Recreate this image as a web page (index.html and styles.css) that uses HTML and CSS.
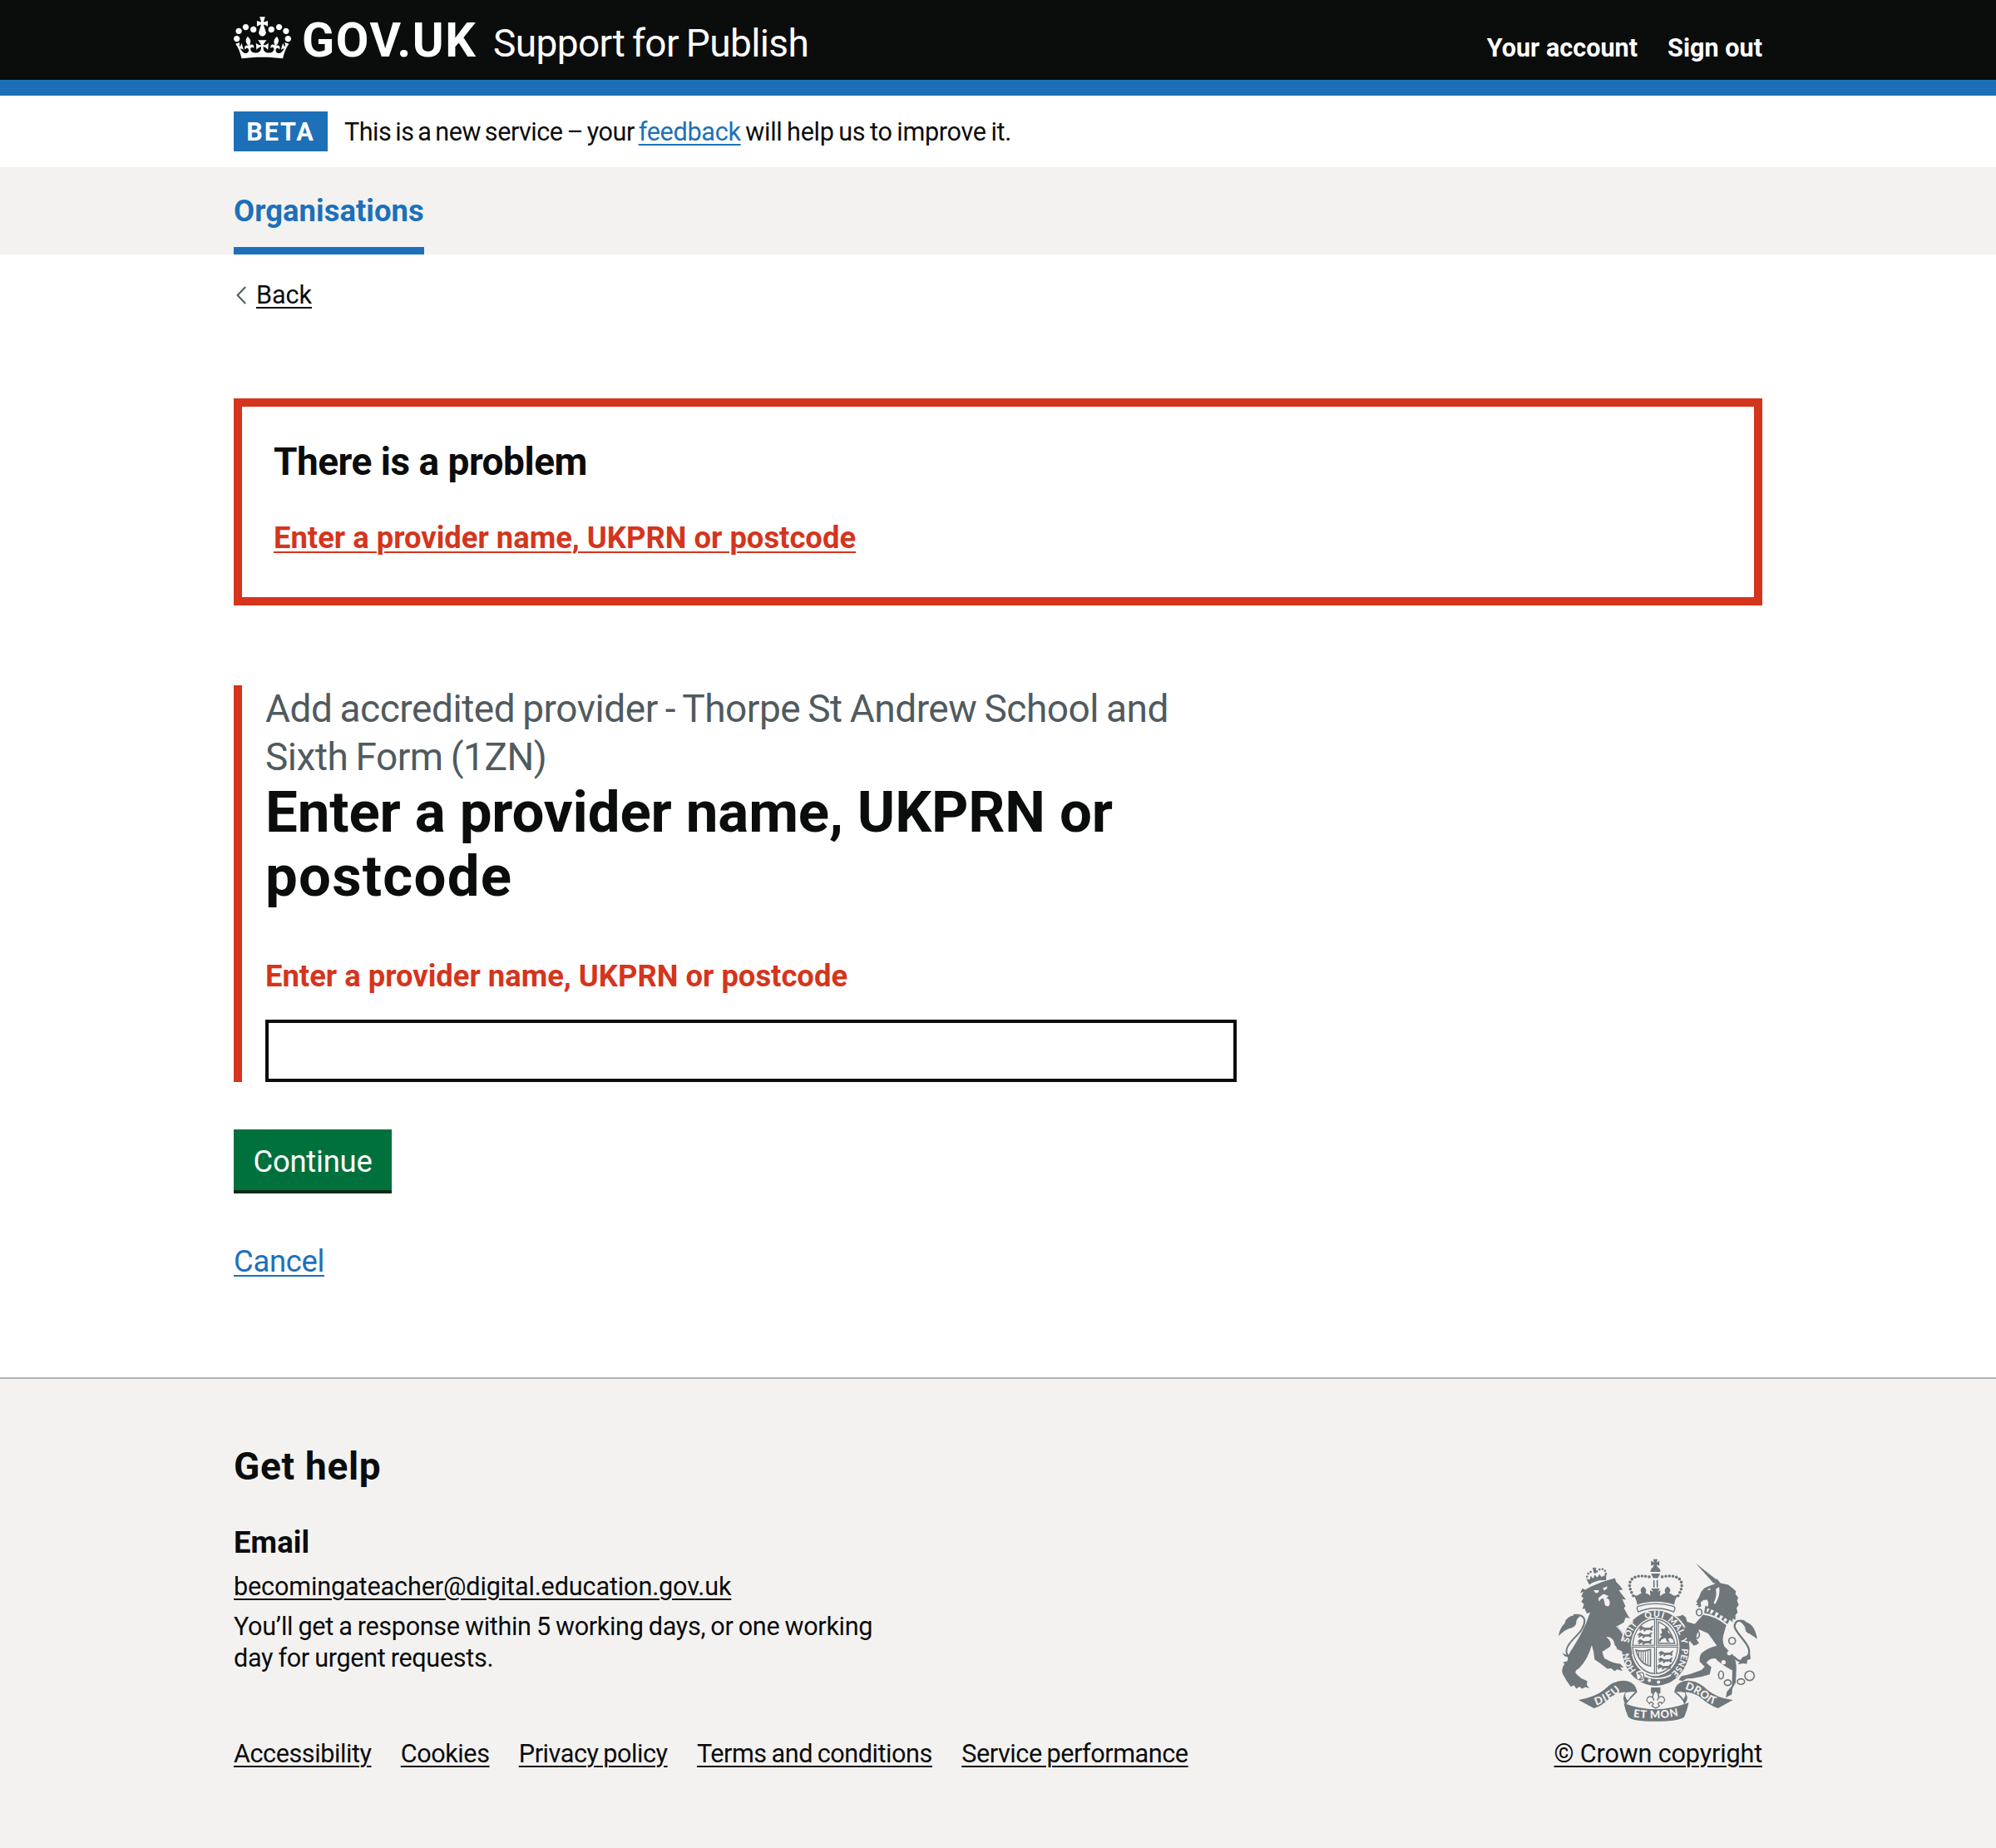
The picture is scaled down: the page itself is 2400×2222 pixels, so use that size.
FILE: index.html
```html
<!DOCTYPE html>
<html lang="en">
<head>
<meta charset="utf-8">
<title>Enter a provider name, UKPRN or postcode - Support for Publish</title>
<link rel="stylesheet" href="styles.css">
</head>
<body>
<header class="header">
  <div class="container header-row">
    <a class="logo" href="#">
      <svg class="logo-crown" viewBox="0 0 132 97" aria-hidden="true"><path fill="currentColor" fill-rule="evenodd" d="M25 30.2c3.5 1.5 7.7-.2 9.1-3.7 1.5-3.6-.2-7.8-3.9-9.2-3.6-1.4-7.6.3-9.1 3.9-1.4 3.5.3 7.5 3.9 9zM9 39.5c3.6 1.5 7.8-.2 9.2-3.7 1.5-3.6-.2-7.8-3.9-9.1-3.6-1.5-7.6.2-9.1 3.8-1.4 3.5.3 7.5 3.8 9zM4.4 57.2c3.5 1.5 7.7-.2 9.1-3.8 1.5-3.6-.2-7.7-3.9-9.1-3.5-1.5-7.6.3-9.1 3.8-1.4 3.5.3 7.6 3.9 9.1zm38.3-21.4c3.5 1.5 7.7-.2 9.1-3.8 1.5-3.6-.2-7.7-3.9-9.1-3.6-1.5-7.6.3-9.1 3.8-1.3 3.6.4 7.7 3.9 9.1zm64.4-5.6c-3.6 1.5-7.8-.2-9.1-3.7-1.5-3.6.2-7.8 3.8-9.2 3.6-1.4 7.7.3 9.2 3.9 1.3 3.5-.4 7.5-3.9 9zm15.9 9.3c-3.6 1.5-7.7-.2-9.1-3.7-1.5-3.6.2-7.8 3.7-9.1 3.6-1.5 7.7.2 9.2 3.8 1.5 3.5-.3 7.5-3.8 9zm4.7 17.7c-3.6 1.5-7.8-.2-9.2-3.8-1.5-3.6.2-7.7 3.9-9.1 3.6-1.5 7.7.3 9.2 3.8 1.3 3.5-.4 7.6-3.9 9.1zM89.3 35.8c-3.6 1.5-7.8-.2-9.2-3.8-1.4-3.6.2-7.7 3.9-9.1 3.6-1.5 7.7.3 9.2 3.8 1.4 3.6-.3 7.7-3.9 9.1zM69.7 17.7l8.9 4.7V9.3l-8.9 2.8c-.2-.3-.5-.6-.9-.9L72.4 0H59.6l3.5 11.2c-.3.3-.6.5-.9.9l-8.8-2.8v13.1l8.8-4.7c.3.3.6.7.9.9l-5 15.4v.1c-.2.8-.4 1.6-.4 2.4 0 4.1 3.1 7.5 7 8.1h.2c.3 0 .7.1 1 .1.4 0 .7 0 1-.1h.2c4-.6 7.1-4.1 7.1-8.1 0-.8-.1-1.7-.4-2.4V34l-5.1-15.4c.4-.2.7-.6 1-.9zM66 92.8c16.9 0 32.8 1.1 47.1 3.2 4-16.9 8.9-26.7 14-33.5l-9.6-3.4c1 4.9 1.1 7.2 0 10.2-1.5-1.4-3-4.3-4.2-8.7L108.6 76c2.8-2 5-3.2 7.5-3.3-4.4 9.4-10 11.9-13.6 11.2-4.3-.8-6.3-4.6-5.6-7.9 1-4.7 5.7-5.9 8-.5 4.3-8.7-3-11.4-7.6-8.8 7.1-7.2 7.9-13.5 2.1-21.1-8 6.1-8.1 12.3-4.5 20.8-4.7-5.4-12.1-2.5-9.5 6.2 3.4-5.2 7.9-2 7.2 3.1-.6 4.3-6.4 7.8-13.5 7.2-10.3-.9-10.9-8-11.2-13.8 2.5-.5 7.1 1.8 11 7.3L80.2 60c-4.1 4.4-8 5.3-12.3 5.4 1.4-4.4 8-11.6 8-11.6H55.5s6.4 7.2 7.9 11.6c-4.2-.1-8-1-12.3-5.4l1.4 16.4c3.9-5.5 8.5-7.7 10.9-7.3-.3 5.8-.9 12.8-11.1 13.8-7.2.6-12.9-2.9-13.5-7.2-.7-5 3.8-8.3 7.1-3.1 2.7-8.7-4.6-11.6-9.4-6.2 3.7-8.5 3.6-14.7-4.6-20.8-5.8 7.6-5 13.9 2.2 21.1-4.7-2.6-11.9.1-7.7 8.8 2.3-5.5 7.1-4.2 8.1.5.7 3.3-1.3 7.1-5.7 7.9-3.5.7-9-1.8-13.5-11.2 2.5.1 4.7 1.3 7.5 3.3l-4.7-15.4c-1.2 4.4-2.7 7.2-4.3 8.7-1.1-3-.9-5.3 0-10.2l-9.5 3.4c5 6.9 9.9 16.7 14 33.5 14.8-2.1 30.8-3.2 47.7-3.2z"/></svg>
      <span class="logo-text">GOV.UK</span>
    </a>
    <a class="service-name" href="#">Support for Publish</a>
    <nav class="account-nav">
      <a href="#">Your account</a>
      <a href="#">Sign out</a>
    </nav>
  </div>
</header>

<div class="container phase-banner">
  <strong class="phase-tag">BETA</strong>
  <span class="phase-text"><span class="phase-lead">This is a new service – your </span><a class="link" href="#">feedback</a> will help us to improve it.</span>
</div>

<nav class="primary-nav">
  <div class="container"><a class="primary-nav-link" href="#">Organisations</a></div>
</nav>

<div class="container">
  <a class="back-link" href="#">
    <svg class="back-chevron" viewBox="0 0 12 22" aria-hidden="true"><path d="M11.2 1 1.6 11l9.6 10" fill="none" stroke="currentColor" stroke-width="2"/></svg>
    <span class="back-text">Back</span>
  </a>

  <main>
    <section class="error-summary">
      <h2 class="error-summary-title">There is a problem</h2>
      <a class="error-summary-link" href="#provider">Enter a provider name, UKPRN or postcode</a>
    </section>

    <form>
      <div class="form-group">
        <span class="caption">Add accredited provider - Thorpe St Andrew School and<br>Sixth Form (1ZN)</span>
        <h1 class="title"><label for="provider">Enter a provider name, UKPRN or <br><span class="title-end">postcode</span></label></h1>
        <p class="error-message">Enter a provider name, UKPRN or postcode</p>
        <input class="input" id="provider" type="text">
      </div>
      <button class="button" type="button">Continue</button>
    </form>
    <a class="link cancel" href="#">Cancel</a>
  </main>
</div>

<footer class="footer">
  <div class="container footer-row">
    <div class="footer-main">
      <h2 class="footer-title">Get help</h2>
      <h3 class="footer-subtitle">Email</h3>
      <a class="footer-link footer-email" href="#">becomingateacher@digital.education.gov.uk</a>
      <p class="footer-text">You’ll get a response within 5 working days, or one working<br>day for urgent requests.</p>
      <ul class="footer-links">
        <li><a class="footer-link" href="#">Accessibility</a></li>
        <li><a class="footer-link" href="#">Cookies</a></li>
        <li><a class="footer-link" href="#">Privacy policy</a></li>
        <li><a class="footer-link" href="#">Terms and conditions</a></li>
        <li><a class="footer-link" href="#">Service performance</a></li>
      </ul>
    </div>
    <div class="footer-crest">
      <svg class="crest" viewBox="42 38 718 588" aria-hidden="true">
        <defs>
          <path id="garter" d="M391 475A96 113 0 0 1 391 249A96 113 0 0 1 391 475"/>
          <path id="dieu" d="M178 568Q230 552 274 508"/>
          <path id="mon" d="M312 610Q394 622 480 605"/>
          <path id="droit" d="M498 509Q544 522 578 554Q598 568 640 566"/>
          <g id="passant">
            <path d="M0 10l8-7 8 3 5 4 20-1 7-7 5 1-5 8 2 8-6 2-3-4-14 1-6 5-5-2 3-6-9 2-4 5-4-3 4-6-6 1z"/>
          </g>
        </defs>
        <!-- lion and its crown -->
        <g>
          <circle cx="145" cy="103" r="4"/><circle cx="149" cy="92" r="4"/><circle cx="158" cy="86" r="4"/><circle cx="180" cy="84" r="4"/><circle cx="190" cy="77" r="4"/><circle cx="201" cy="76" r="4"/><circle cx="210" cy="82" r="4"/><circle cx="213" cy="93" r="4"/>
          <path d="M164 70l5 2 2-4 3 4 5-2-2 8 1 12-8 1-3-12z"/>
        </g>
        <path d="M153 132l-11-22 12 4 4-14 9 10 6-14 9 10 8-12 6 10 10-4 8-10 0 26q-34-4-61 16z"/>
        <path d="M138 150l22-12 40-16 46-14 4 14 14 14 10 14-14 2 12 16 14 18-14-2 12 26-6 6 16 30 6 8-16-4-6 18-24 14 22 26 24 26 10 22-14 8-4 12-16-8-10 4-6-16-14-4-6-20-12-10-14-2q24 20 14 36l-28 18q2 12 8 24 30 18 58 20l12 14-14-2 10 14-20-6-10 6-12-10-14 2q-24-20-46-34-2-30-10-52-14 52-46 84-16 8-12 18l20 18 22 10-2 14 10 12-14-4-14 6-8-8-12 8-8-12-12 4q-16-20-30-48-4-20 8-34l-6-6 16-4 8-30q40-60 60-108l14-38-12 4-8-18-8 2 6-18-10-8 8-14-8-6 8-16-12 4 8-16z"/>
        <path d="M168 152l20 0-2 8-10 2zM202 144l16-6-1 8-10 7zM186 180l18-15 19 8-6 6-6-2 12 8q8 10 1 24-16 4-16-14l-4-14-8 2-8 10z" fill="#f3f2f1"/>
        <path d="M250 281q34 30 48 86" fill="none" stroke="#f3f2f1" stroke-width="3"/>
        <path d="M112 386q-46 14-41-20c7-36 66-60 65-106q-5-24-40-18" fill="none" stroke="currentColor" stroke-width="6"/>
        <path d="M42 318q4-30 22-46 2-24 38-30l18 4q-14 10-14 22t-16 20q-26 6-48 30zM56 378q14 12 30 2l34-14-12 34q-20-10-26 10-8-10-8-18-12 2-18-14z"/>

        <!-- unicorn -->
        <path d="M537 54l78 62-12 12z"/>
        <path d="M549 178l8-20 12-14 24-10 12-4 8-20 14 16 28 6 20 16 8 8-2 10 10 12-4 12 6 14-8 12 4 16-8 10 0 18-10-6 0 14-12-12-84-34q14-20 4-36l-14 2-10 8 2 14-8 4-4-8-8 0 8-8-6-4z"/>
        <path d="M578 150l14-6-4 8z" fill="#f3f2f1"/>
        <path d="M622 140q6 30-14 62l-6-4q14-26 8-50z" fill="#f3f2f1"/>
        <path d="M572 208q46 14 90 48l-10 18q-40-34-84-40z"/>
        <path d="M580 216l7 3-6 12-5-2zM594 221l10 5-10 12-6-3zM611 230l10 6-9 12-7-4zM628 241l9 6-9 13-7-5zM643 252l9 6-7 8-8-4z" fill="#f3f2f1"/>
        <path d="M564 240q46 6 84 38l-8 28q-10 28 2 50l34 34q10 30 8 50l-2 46-12 20-2 22-22 12 4-22 18-20 2-56q-44-24-62-44-22 0-32 16l18 16-6 26q-28 10-62 14l-22 2-14 8-14-4 10-14 28-6 44-16 12-12-18-18q-2-26 10-34 20-16 52-24-16-22-32-44l-32-14-8 18-8 24 10 12-14 4-8-10-16 2-8-14-12-2 10-6-8-12 20 4 14-18-18-4q-16-10-18-26l-14-8-12-2 6-10 14 0 10-6 12 10 4 16 28 8z"/>
        <path d="M676 392q18 26 42 6c42-36-32-80-40-114q0-20 18-22" fill="none" stroke="currentColor" stroke-width="7"/>
        <path d="M690 262q16-10 32 6 28 8 38 60l-26-18q-20-6-18-24-8-16-26-24zM690 420l16-26 28-12 2 18-12 4-2 14-14-2z"/>
        <g fill="#f3f2f1"><circle cx="659" cy="379" r="8"/><circle cx="638" cy="412" r="8"/></g>
        <g fill="none" stroke="currentColor" stroke-width="5"><ellipse cx="550" cy="232" rx="10" ry="12"/><ellipse cx="541" cy="312" rx="10" ry="13"/><circle cx="669" cy="335" r="12"/><ellipse cx="629" cy="458" rx="9" ry="14"/><ellipse cx="653" cy="486" rx="12" ry="10"/><ellipse cx="701" cy="482" rx="13" ry="10"/><circle cx="732" cy="461" r="17"/></g>

        <!-- garter and shield -->
        <ellipse cx="393" cy="361" rx="128" ry="141" fill="#f3f2f1"/>
        <ellipse cx="393" cy="361" rx="122" ry="136"/>
        <ellipse cx="391" cy="356" rx="88" ry="106" fill="#f3f2f1"/>
        <ellipse cx="391" cy="355" rx="81" ry="98" fill="none" stroke="currentColor" stroke-width="4"/>
        <path d="M308 354h166M392 255v198" stroke="currentColor" stroke-width="10"/>
        <path d="M308 354h166M392 255v198" stroke="#f3f2f1" stroke-width="3"/>
        <use href="#passant" x="332" y="278"/><use href="#passant" x="328" y="302"/><use href="#passant" x="328" y="326"/>
        <use href="#passant" x="404" y="368"/><use href="#passant" x="402" y="392"/><use href="#passant" x="398" y="416"/>
        <path d="M402 266q42 14 60 78h-60z" fill="none" stroke="currentColor" stroke-width="4"/>
        <path d="M412 290l12 2 8-10 8 8-4 12 14 12 6 18-10-8-8 4 6 12-10-2-6-14-14 6-6 10-4-8 10-14-6-6 8-6z"/>
        <path d="M322 368q22 8 52-2v60q-40-8-52-58z" fill="none" stroke="currentColor" stroke-width="5"/>
        <path d="M332 372l0 18M340 372l0 30M348 372l0 38M356 371l0 45M365 369l0 50" stroke="currentColor" stroke-width="3"/>
        <path d="M322 448q30-16 36 10 42 22 92-4l-4 14q-30 16-90 6-10 14-28 4z" fill="#f3f2f1"/>
        <path d="M330 452q22-8 20 10t-18 12q20-8-2-22z" fill="none" stroke="currentColor" stroke-width="4"/>
        <path d="M352 464q44 20 96-2v20q-50 22-98 4z"/>
        <g fill="#f3f2f1"><circle cx="370" cy="478" r="6"/><circle cx="403" cy="484" r="6"/></g>
        <g class="crest-motto">
          <text textLength="70"><textPath href="#garter" startOffset="12%">HON</textPath></text>
          <text textLength="74"><textPath href="#garter" startOffset="28%">SOIT</textPath></text>
          <text textLength="66"><textPath href="#garter" startOffset="44.5%">QUI</textPath></text>
          <text textLength="70"><textPath href="#garter" startOffset="57%">MAL</textPath></text>
          <text><textPath href="#garter" startOffset="69.5%">Y</textPath></text>
          <text textLength="100"><textPath href="#garter" startOffset="75%">PENSE</textPath></text>
        </g>
        <path d="M240 330l30 6 34 18 4 30-18-6-10 8-12-16-14-4z"/>
        <path d="M496 284l24 8 12 24 18 28-14 4-14-12-14 2-4-18-12-4 10-8z"/>

        <!-- royal crown -->
        <path d="M384 40h16l-4 11 10-5v18l-10-5 5 12h-19l5-12-11 5v-18l11 5zM374 86q0-18 18-18t18 18zM376 92h33l-8 16h-17zM384 116h5v26h-5zM396 116h5v26h-5zM376 146h32l-8 12 10-6-2 24h-34l-2-24 12 6z"/>
        <g fill="none" stroke="currentColor" stroke-width="11" stroke-linecap="round" stroke-dasharray="0 13"><path d="M312 172c-30-50-8-82 60-68"/><path d="M474 172c30-50 8-82-60-68"/></g>
        <path d="M308 164q14 14 26 2l8-4q-10-14 6-24 16 10 8 24l10 4q10 10 26 10t26-10l10-4q-8-14 8-24 16 10 6 24l8 4q12 12 28-2-16 18-18 40-66-22-134 0-2-22-18-40z"/>
        <path d="M330 210q62-20 126 0 8 2 6 10l-4 10q-66-26-128 0l-4-10q-2-8 4-10z" fill="#f3f2f1" stroke="currentColor" stroke-width="4"/>

        <!-- ribbon -->
        <path d="M114 548q60-10 92-36 40-40 84-32 32 8 36 40l-22 22q-16 14-18 26-20-28 0-48-30-2-60 22-30 30-56 36z"/>
        <path d="M672 548q-58-6-92-36-40-40-84-32-32 8-36 40l22 20q12 12 14 24 22-24 0-44 36 0 62 22 30 26 60 36z"/>
        <path d="M284 520q16-4 38-2-20 16-30 34-16-16-8-32zM500 520q-16-4-36-2 20 14 30 30 12-16 6-28z" fill="#f3f2f1" stroke="currentColor" stroke-width="3"/>
        <path d="M278 560q60 22 114 22t120-24q-4 24-16 52-20 16-104 16t-98-16q-12-26-16-50z"/>
        <path d="M376 503h34v22h-34z"/>
        <path d="M393 514q18 18 6 36 4-16 18-14 18 12-2 26-2-10-10-4l-4 4 6 8-14 8-14-8 6-8-4-4q-8-6-10 4-20-14-2-26 14-2 18 14-12-18 6-36z" fill="#f3f2f1" stroke="currentColor" stroke-width="4"/>
        <g class="crest-motto crest-ribbon">
          <text textLength="104"><textPath href="#dieu">DIEU</textPath></text>
          <text textLength="164"><textPath href="#mon">ET MON</textPath></text>
          <text textLength="124"><textPath href="#droit">DROIT</textPath></text>
        </g>
      </svg>
      <a class="footer-link" href="#">© Crown copyright</a>
    </div>
  </div>
</footer>
</body>
</html>
```
FILE: styles.css
```css
* { box-sizing: border-box; }

body {
  margin: 0;
  background: #fff;
  color: #0b0c0c;
  font-family: Roboto, "Liberation Sans", sans-serif;
  font-size: 30.6px;
  line-height: 38.5px;
}

h1, h2, h3, p, ul { margin: 0; padding: 0; }

.container { width: 1838px; margin: 0 auto; }

a {
  color: inherit;
  text-decoration-thickness: 2px;
  text-underline-offset: 4px;
}

.link { color: #1d70b8; }

/* Header */
.header {
  height: 115px;
  background: #0b0c0c;
  border-bottom: 19px solid #1d70b8;
  color: #fff;
}
.header a { text-decoration: none; }
.header-row { display: flex; align-items: baseline; padding-top: 19px; }
.logo { display: flex; align-items: baseline; gap: 13px; line-height: 60px; }
.logo-crown { width: 69px; height: 51px; align-self: flex-start; margin-top: 1px; }
.logo-text { width: 212px; font-size: 57.5px; font-weight: 700; letter-spacing: 1.6px; }
.service-name { margin-left: 18px; font-size: 46px; letter-spacing: -.6px; word-spacing: -2px; }
.account-nav { display: flex; gap: 36px; margin-left: auto; font-weight: 700; }

/* Phase banner */
.phase-banner { display: flex; align-items: center; gap: 20px; height: 86px; }
.phase-tag {
  width: 113px;
  height: 48px;
  padding-top: 6px;
  background: #1d70b8;
  color: #fff;
  letter-spacing: 1.9px;
  text-align: center;
}
.phase-text { padding-top: 2px; letter-spacing: -.3px; word-spacing: -1.6px; }
.phase-lead { letter-spacing: -.5px; word-spacing: -2.2px; }

/* Primary navigation */
.primary-nav { height: 105px; background: #f3f2f1; }
.primary-nav .container { display: flex; }
.primary-nav-link {
  padding: 29px 0 19px;
  border-bottom: 9px solid #1d70b8;
  color: #1d70b8;
  font-size: 36.4px;
  font-weight: 700;
  line-height: 48px;
  letter-spacing: .05px;
  text-decoration: none;
}

/* Back link */
.back-link {
  display: flex;
  width: max-content;
  margin-top: 30px;
  padding-left: 3px;
  gap: 12px;
  text-decoration: none;
}
.back-chevron { width: 12px; height: 22px; margin-top: 8px; color: #505a5f; }
.back-text { text-decoration: underline; text-decoration-thickness: 2px; text-underline-offset: 4px; letter-spacing: -.06px; }

/* Error summary */
.error-summary {
  height: 249px;
  margin-top: 104.5px;
  padding: 38px 38px 0;
  border: 10px solid #d4351c;
}
.error-summary-title { margin-bottom: 39px; font-size: 46px; line-height: 57px; letter-spacing: -.5px; }
.error-summary-link {
  display: block;
  color: #d4351c;
  font-size: 36.4px;
  font-weight: 700;
  line-height: 48px;
}

/* Form */
.form-group {
  width: 1206px;
  margin-top: 96px;
  padding-left: 28px;
  border-left: 10px solid #d4351c;
}
.caption {
  display: block;
  color: #505a5f;
  font-size: 46px;
  line-height: 57.5px;
  letter-spacing: -.45px;
  word-spacing: -2px;
}
.title { font-size: 69px; line-height: 76.5px; letter-spacing: -.12px; }
.title-end { letter-spacing: 1.2px; }
.error-message {
  margin-top: 58px;
  color: #d4351c;
  font-size: 36.4px;
  font-weight: 700;
  line-height: 48px;
}
.input {
  display: block;
  width: 1168px;
  height: 75px;
  margin-top: 28px;
  border: 4px solid #0b0c0c;
  border-radius: 0;
  background: #fff;
  font: inherit;
}
.button {
  display: block;
  width: 190px;
  height: 73px;
  margin-top: 57px;
  padding: 4px 0 0;
  border: 0;
  background: #00703c;
  box-shadow: 0 4px 0 #002d18;
  color: #fff;
  font: 400 36.4px/48px Roboto, "Liberation Sans", sans-serif;
  letter-spacing: -.2px;
}
.cancel {
  display: block;
  width: max-content;
  margin-top: 62px;
  font-size: 36.4px;
  line-height: 48px;
  letter-spacing: -.3px;
}

/* Footer */
.footer {
  height: 567px;
  margin-top: 114.5px;
  border-top: 2px solid #b1b4b6;
  background: #f3f2f1;
}
.footer-row { display: flex; justify-content: space-between; padding-top: 77px; }
.footer-title { font-size: 46px; line-height: 57px; letter-spacing: .7px; }
.footer-subtitle { margin-top: 39px; font-size: 36.4px; line-height: 48px; letter-spacing: .1px; }
.footer-email { display: block; width: max-content; margin-top: 10px; letter-spacing: -.14px; }
.footer-text { margin-top: 9.5px; letter-spacing: -.33px; word-spacing: -1px; }
.footer-links {
  display: flex;
  gap: 35.3px;
  margin-top: 76px;
  list-style: none;
  letter-spacing: -.44px;
  word-spacing: -1.4px;
}
.footer-crest {
  display: flex;
  flex-direction: column;
  align-items: center;
  padding-top: 139px;
  letter-spacing: -.17px;
}
.crest { width: 239px; height: 196px; margin-bottom: 20px; color: #6f777b; fill: currentColor; }
.crest-motto { fill: #f3f2f1; font: 900 32px Lato, sans-serif; letter-spacing: 0; }
.crest-ribbon { font-size: 39px; }
```
